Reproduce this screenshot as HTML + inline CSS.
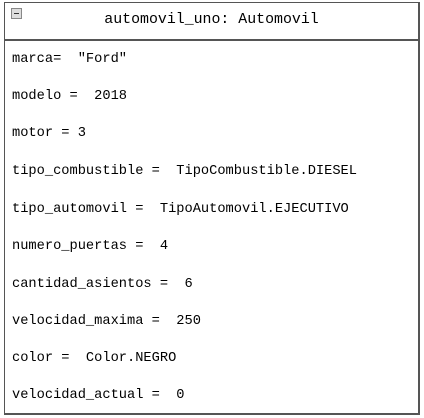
<!DOCTYPE html>
<html><head><style>
html,body{margin:0;padding:0;background:#fff;width:424px;height:418px;overflow:hidden}
.box{position:absolute;left:4px;top:2px;width:413px;height:410px;border:1px solid #555;border-right:2px solid #555;border-bottom:2px solid #555;background:#fff}
.hdr{position:absolute;left:0;top:0;width:413px;height:36px;border-bottom:2px solid #555;}
.title{position:absolute;left:0;width:413px;top:9px;text-align:center;font:14.9px "Liberation Mono",monospace;color:#000}
.ic{position:absolute;left:6px;top:5px;width:9px;height:9px;border:1px solid #888;background:#ddd}
.ic:after{content:"";position:absolute;left:2px;top:4px;width:5px;height:1px;background:#333}
.r{position:absolute;left:7px;font:13.7px "Liberation Mono",monospace;color:#000;white-space:pre;line-height:16px}
</style></head><body>
<div class="box">
<div class="hdr"><div class="ic"></div><div class="title">automovil_uno: Automovil</div></div>
<div class="r" style="top:49px">marca=  "Ford"</div>
<div class="r" style="top:86px">modelo =  2018</div>
<div class="r" style="top:123px">motor = 3</div>
<div class="r" style="top:161px">tipo_combustible =  TipoCombustible.DIESEL</div>
<div class="r" style="top:199px">tipo_automovil =  TipoAutomovil.EJECUTIVO</div>
<div class="r" style="top:236px">numero_puertas =  4</div>
<div class="r" style="top:274px">cantidad_asientos =  6</div>
<div class="r" style="top:311px">velocidad_maxima =  250</div>
<div class="r" style="top:348px">color =  Color.NEGRO</div>
<div class="r" style="top:385px">velocidad_actual =  0</div>
</div>
</body></html>
